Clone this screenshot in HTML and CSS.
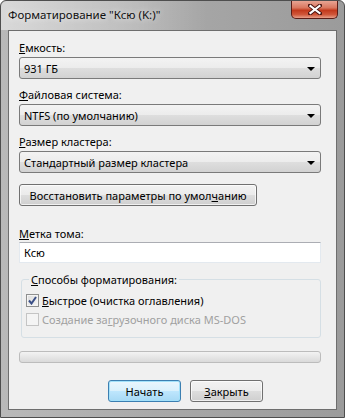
FILE: index.html
```html
<!DOCTYPE html>
<html lang="ru">
<head>
    <meta charset="UTF-8">
    <meta name="viewport" content="width=device-width, initial-scale=1.0">
    <title>Форматирование</title>
    <link rel="stylesheet" href="styles.css">
</head>
<body>
  <div class="window">
    <div class="titlebar">
      <span class="title">Форматирование "Ксю (K:)"</span>
      <div class="close-btn">
        <svg width="14" height="11" viewBox="0 0 14 11">
          <path d="M2 1.5 L12 9.5 M12 1.5 L2 9.5" stroke="#4a1410" stroke-width="4" stroke-linecap="square"/>
          <path d="M2.5 2 L11.5 9 M11.5 2 L2.5 9" stroke="#ffffff" stroke-width="2.2" stroke-linecap="square"/>
        </svg>
      </div>
    </div>

    <div class="client">
      <div class="label"><u>Е</u>мкость:</div>
      <div class="combo">
        <span>931 ГБ</span>
        <span class="arrow"></span>
      </div>

      <div class="label"><u>Ф</u>айловая система:</div>
      <div class="combo">
        <span>NTFS (по умолчанию)</span>
        <span class="arrow"></span>
      </div>

      <div class="label"><u>Р</u>азмер кластера:</div>
      <div class="combo">
        <span>Стандартный размер кластера</span>
        <span class="arrow"></span>
      </div>

      <div class="btn reset-btn"><span>Восстановить параметры по умол<u>ч</u>анию</span></div>

      <div class="label label-volume"><u>М</u>етка тома:</div>
      <div class="textbox">Ксю</div>

      <fieldset class="group">
        <legend><u>С</u>пособы форматирования:</legend>
        <div class="check-row">
          <span class="checkbox">
            <svg width="9" height="9" viewBox="0 0 9 9">
              <path d="M1 4.5 L3.5 7.5 L8 1" fill="none" stroke="#3a4f87" stroke-width="2"/>
            </svg>
          </span>
          <span><u>Б</u>ыстрое (очистка оглавления)</span>
        </div>
        <div class="check-row disabled">
          <span class="checkbox"></span>
          <span>Создание за<u>г</u>рузочного диска MS-DOS</span>
        </div>
      </fieldset>

      <div class="progress"></div>

      <div class="actions">
        <div class="btn btn-default"><span>Начать</span></div>
        <div class="btn"><span><u>З</u>акрыть</span></div>
      </div>
    </div>
  </div>
</body>
</html>
```

FILE: styles.css
```css
body {
    margin: 0;
    font-family: 'Noto Sans', 'Open Sans', sans-serif;
    font-size: 11px;
    color: #000000;
}

u {
    text-decoration: underline;
    text-underline-offset: 1px;
}

/* window frame */
.window {
    width: 345px;
    height: 418px;
    box-sizing: border-box;
    border: 1px solid #4e4e4e;
    border-radius: 6px 6px 0 0;
    background: linear-gradient(90deg, #b9b9b9 0%, #a9a9a9 45%, #9b9b9b 100%);
    padding: 0 7px 7px 7px;
    display: flex;
    flex-direction: column;
}

.titlebar {
    height: 29px;
    display: flex;
    align-items: flex-start;
    justify-content: space-between;
    background: linear-gradient(90deg, rgba(255,255,255,0.45) 0%, rgba(255,255,255,0.2) 40%, rgba(255,255,255,0) 60%);
    margin: 0 -7px;
    padding: 0 7px 0 7px;
    border-radius: 6px 6px 0 0;
}

.title {
    margin-top: 6px;
    line-height: 16px;
    font-size: 11.5px;
    color: #111111;
    text-shadow: 0 0 6px rgba(255,255,255,0.9);
}

.close-btn {
    width: 45px;
    height: 17px;
    margin-right: -1px;
    border: 1px solid #5a1d17;
    border-top: none;
    border-radius: 0 0 5px 5px;
    background: linear-gradient(180deg, #e8a493 0%, #d9775f 40%, #c2391c 55%, #d0573a 80%, #e7a08a 100%);
    display: flex;
    align-items: center;
    justify-content: center;
}

.client {
    flex: 1;
    background: #f0f0f0;
    border: 1px solid #6e6e6e;
    padding: 9px 15px 0 10px;
    display: flex;
    flex-direction: column;
}

.label {
    line-height: 15px;
    margin-bottom: 2px;
}

.combo {
    height: 22px;
    box-sizing: border-box;
    border: 1px solid #7a7a7a;
    border-radius: 3px;
    background: linear-gradient(180deg, #f3f3f3 0%, #ececec 50%, #dedede 51%, #d2d2d2 100%);
    display: flex;
    align-items: center;
    justify-content: space-between;
    padding: 0 5px 0 4px;
    margin-bottom: 8px;
}

.arrow {
    width: 0;
    height: 0;
    border-left: 4px solid transparent;
    border-right: 4px solid transparent;
    border-top: 4px solid #000000;
    margin-top: 1px;
}

.btn {
    height: 22px;
    box-sizing: border-box;
    border: 1px solid #707070;
    border-radius: 3px;
    background: linear-gradient(180deg, #f2f2f2 0%, #ebebeb 50%, #dddddd 51%, #cfcfcf 100%);
    display: flex;
    align-items: center;
    justify-content: center;
    box-shadow: inset 0 0 0 1px rgba(255,255,255,0.7);
}

.reset-btn {
    width: 238px;
    margin-top: 3px;
}

.label-volume {
    margin-top: 20px;
    margin-bottom: 1px;
}

.textbox {
    height: 21px;
    box-sizing: border-box;
    background: #ffffff;
    border: 1px solid #e3e9ef;
    border-top-color: #abadb3;
    padding: 0 4px;
    display: flex;
    align-items: center;
}

.group {
    margin: 9px 0 0 2px;
    padding: 4px 6px 8px 4px;
    border: 1px solid #d5dfe5;
    border-radius: 3px;
}

.group legend {
    padding: 0 2px;
    margin-left: 3px;
    line-height: 15px;
}

.check-row {
    height: 19px;
    display: flex;
    align-items: center;
    gap: 3px;
}

.checkbox {
    width: 13px;
    height: 13px;
    box-sizing: border-box;
    border: 1px solid #8e8f8f;
    background: linear-gradient(135deg, #dcdcdc 0%, #f6f6f6 100%);
    box-shadow: inset 0 0 0 1px #f4f4f4;
    display: flex;
    align-items: center;
    justify-content: center;
}

.disabled {
    color: #a0a0a0;
}

.disabled .checkbox {
    border-color: #c4c4c4;
    background: #f4f4f4;
    box-shadow: none;
}

.progress {
    height: 12px;
    box-sizing: border-box;
    margin-top: 13px;
    border: 1px solid #bcbcbc;
    border-radius: 3px;
    background: linear-gradient(180deg, #f3f3f3 0%, #e6e6e6 50%, #dadada 100%);
}

.actions {
    display: flex;
    gap: 9px;
    padding-left: 89px;
    margin-top: 17px;
}

.actions .btn {
    width: 73px;
}

.btn-default {
    border-color: #3c7fb1;
    background: linear-gradient(180deg, #eaf6fd 0%, #d9f0fc 50%, #bee6fd 51%, #a7d9f5 100%);
    box-shadow: inset 0 0 0 1px #a3e1fa;
}
```
